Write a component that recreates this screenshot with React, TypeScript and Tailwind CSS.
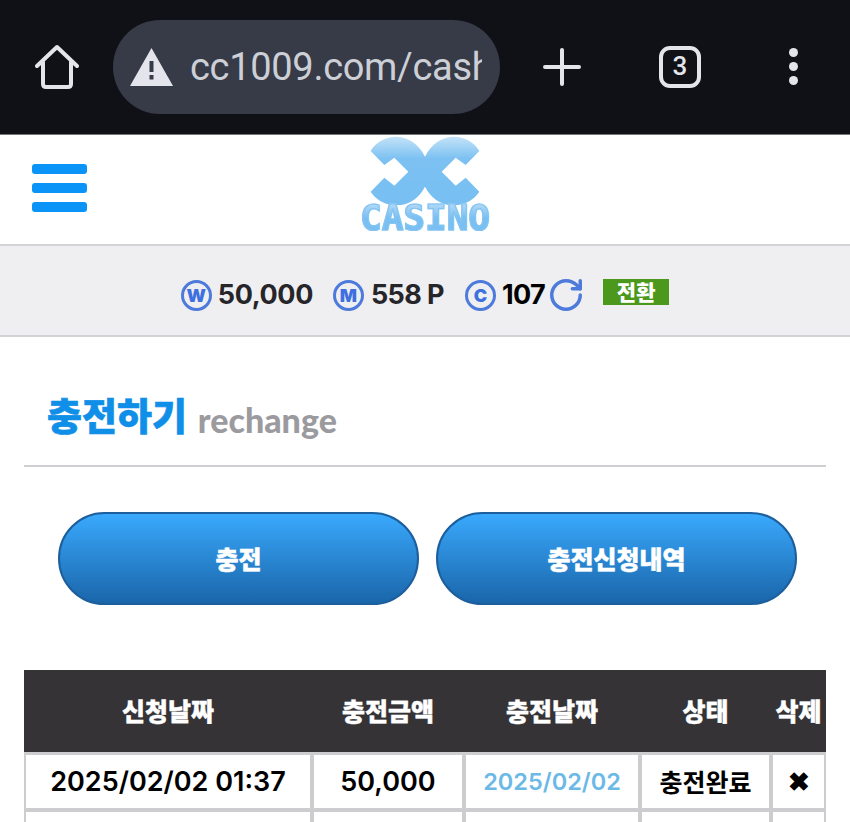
import { RotateCw } from "lucide-react";

const cols = "grid grid-cols-[284px_148px_172px_127px_51px] gap-x-[4px] px-[2px]";
const kr = "font-['Noto_Sans_CJK_KR',sans-serif]";
const num = "font-['Inter','Noto_Sans_CJK_KR',sans-serif]";

function TopBar() {
  return (
    <div className="flex h-[135px] items-center border-b border-[#77787c] bg-[#0f1117] pb-[1px] text-[#e4e5ea]">
      <svg className="ml-[35px] h-[46px] w-[44px]" viewBox="0 0 44 46" fill="none" stroke="currentColor" strokeWidth="4" strokeLinecap="round" strokeLinejoin="round">
        <path d="M2 22 L22 3 L42 22 M8 18 V40 Q8 43 11 43 H33 Q36 43 36 40 V18" />
      </svg>
      <div className="ml-[34px] flex h-[94px] w-[387px] items-center rounded-full bg-[#373a47] pl-[17px]">
        <svg className="h-[38px] w-[43px] shrink-0" viewBox="0 0 43 38">
          <path d="M21.5 0 L43 38 H0 Z" fill="#e4e5ec" />
          <rect x="19.5" y="13" width="4" height="11" fill="#373a47" />
          <rect x="19.5" y="27" width="4" height="4.5" fill="#373a47" />
        </svg>
        <div className="ml-[17px] w-[292px] overflow-hidden whitespace-nowrap font-['Roboto',sans-serif] text-[38px] leading-none font-normal tracking-[-0.3px] text-[#cdcfd6]">
          cc1009.com/cash
        </div>
      </div>
      <svg className="ml-[43px] h-[38px] w-[38px]" viewBox="0 0 38 38" stroke="currentColor" strokeWidth="4" strokeLinecap="round">
        <path d="M19 2 V36 M2 19 H36" />
      </svg>
      <div className="ml-[78px] flex h-[42px] w-[42px] items-center justify-center rounded-[11px] border-[4px] border-[#e4e5ea] font-['Roboto',sans-serif] text-[26px] font-medium">
        3
      </div>
      <div className="ml-[88px] flex w-[10px] flex-col gap-[5px]">
        <div className="h-[9px] w-[9px] rounded-full bg-[#e4e5ea]" />
        <div className="h-[9px] w-[9px] rounded-full bg-[#e4e5ea]" />
        <div className="h-[9px] w-[9px] rounded-full bg-[#e4e5ea]" />
      </div>
    </div>
  );
}

function Logo() {
  return (
    <div className="flex h-[109px] w-[150px] flex-col items-center">
      <svg className="h-[70px] w-[150px] shrink-0" viewBox="0 0 450 210">
        <defs>
          <linearGradient id="logoFill" x1="0" y1="0" x2="0" y2="1">
            <stop offset="0" stopColor="#c4e2f8" />
            <stop offset="0.32" stopColor="#7cc1f2" />
            <stop offset="1" stopColor="#77bff2" />
          </linearGradient>
        </defs>
        <path
          fill="url(#logoFill)"
          d="M62 48 C95 -8 185 -16 225 65 C265 -16 355 -8 388 48 L347 90 L317 68 L275 110 L317 152 L347 128 L388 170 C355 222 265 232 225 155 C185 232 95 222 62 170 L103 128 L133 152 L175 110 L133 68 L103 90 Z"
        />
      </svg>
      <div className="-mt-[2px] bg-gradient-to-b from-[#b5dbf7] to-[#79bff1] to-50% bg-clip-text font-['DejaVu_Sans_Mono',monospace] text-[36px] leading-[30px] font-bold text-transparent [-webkit-text-stroke:1.2px_#84c4f2]">
        CASINO
      </div>
    </div>
  );
}

function Coin({ label }: { label: string }) {
  return (
    <span className="flex h-[31px] w-[31px] shrink-0 items-center justify-center rounded-full border-[3px] border-[#4d7adb] font-['Inter',sans-serif] text-[18px] font-black text-[#3f70e0]">
      {label}
    </span>
  );
}

function Balance() {
  return (
    <div className={`flex h-[93px] items-center justify-center border-y-2 border-[#d3d3d7] bg-[#efeff1] pt-[10px] ${num} text-[27px] font-bold text-[#26262a]`}>
      <Coin label="W" />
      <span className="ml-[6px] tracking-[-0.4px]">50,000</span>
      <span className="ml-[20px]"><Coin label="M" /></span>
      <span className="ml-[7px] tracking-[-0.6px]">558 P</span>
      <span className="ml-[21px]"><Coin label="C" /></span>
      <span className="ml-[6px] tracking-[-0.6px] text-black">107</span>
      <RotateCw className="mb-[2px] ml-[2px] h-[38px] w-[38px] text-[#4d7adb]" strokeWidth={2.2} />
      <span className={`mb-[8px] ml-[18px] flex h-[26px] w-[66px] items-center justify-center bg-[#4c981d] ${kr} text-[21px] font-black text-white`}>
        전환
      </span>
    </div>
  );
}

function ActionButton({ children }: { children: string }) {
  return (
    <button className={`flex h-[93px] w-[361px] items-center justify-center rounded-full border-2 border-[#1c5f9c] bg-gradient-to-b from-[#3aa9fd] to-[#1a66aa] ${kr} text-[25px] font-black text-white [-webkit-text-stroke:0.5px_white]`}>
      {children}
    </button>
  );
}

export default function App() {
  const heads = ["신청날짜", "충전금액", "충전날짜", "상태", "삭제"];

  return (
    <div className="h-[822px] w-[850px] overflow-hidden bg-white">
      <TopBar />
      <div className="grid h-[109px] grid-cols-[1fr_auto_1fr] items-center">
        <div className="mb-[4px] flex flex-col gap-[9px] pl-[32px]">
          <div className="h-[10px] w-[55px] rounded-[3px] bg-[#0b94f7]" />
          <div className="h-[10px] w-[55px] rounded-[3px] bg-[#0b94f7]" />
          <div className="h-[10px] w-[55px] rounded-[3px] bg-[#0b94f7]" />
        </div>
        <Logo />
      </div>
      <Balance />

      <div className="px-[24px]">
        <div className="flex h-[130px] items-end gap-[11px] border-b-2 border-[#cfcfd4] pb-[25px] pl-[23px]">
          <h1 className={`${kr} text-[38px] leading-[52px] font-black text-[#0f8fe8] [-webkit-text-stroke:0.6px_#0f8fe8]`}>충전하기</h1>
          <span className="-mb-[2px] font-['Lato',sans-serif] text-[34px] leading-[44px] font-black text-[#9b9b9f]">rechange</span>
        </div>

        <div className="mt-[45px] flex gap-[17px] pl-[34px]">
          <ActionButton>충전</ActionButton>
          <ActionButton>충전신청내역</ActionButton>
        </div>

        <div className="mt-[65px] bg-[#cdcdd0]">
          <div className={`${cols} h-[82px] items-center bg-[#353336] text-center ${kr} text-[25px] font-black text-white [-webkit-text-stroke:0.4px_white]`}>
            {heads.map((h) => (
              <div key={h}>{h}</div>
            ))}
          </div>
          <div className={`${cols} pt-[3px] pb-[4px] text-center ${num} text-[27px] font-semibold text-black`}>
            <div className="bg-white leading-[53px]">2025/02/02 01:37</div>
            <div className="bg-white leading-[53px]">50,000</div>
            <div className="bg-white text-[23.5px] leading-[53px] font-semibold text-[#6bb9e6]">2025/02/02</div>
            <div className={`bg-white ${kr} text-[25px] leading-[53px] font-bold`}>충전완료</div>
            <div className="bg-white text-[26px] leading-[53px] font-black">✖</div>
          </div>
          <div className={cols}>
            <div className="h-[58px] bg-white" />
            <div className="h-[58px] bg-white" />
            <div className="h-[58px] bg-white" />
            <div className="h-[58px] bg-white" />
            <div className="h-[58px] bg-white" />
          </div>
        </div>
      </div>
    </div>
  );
}
